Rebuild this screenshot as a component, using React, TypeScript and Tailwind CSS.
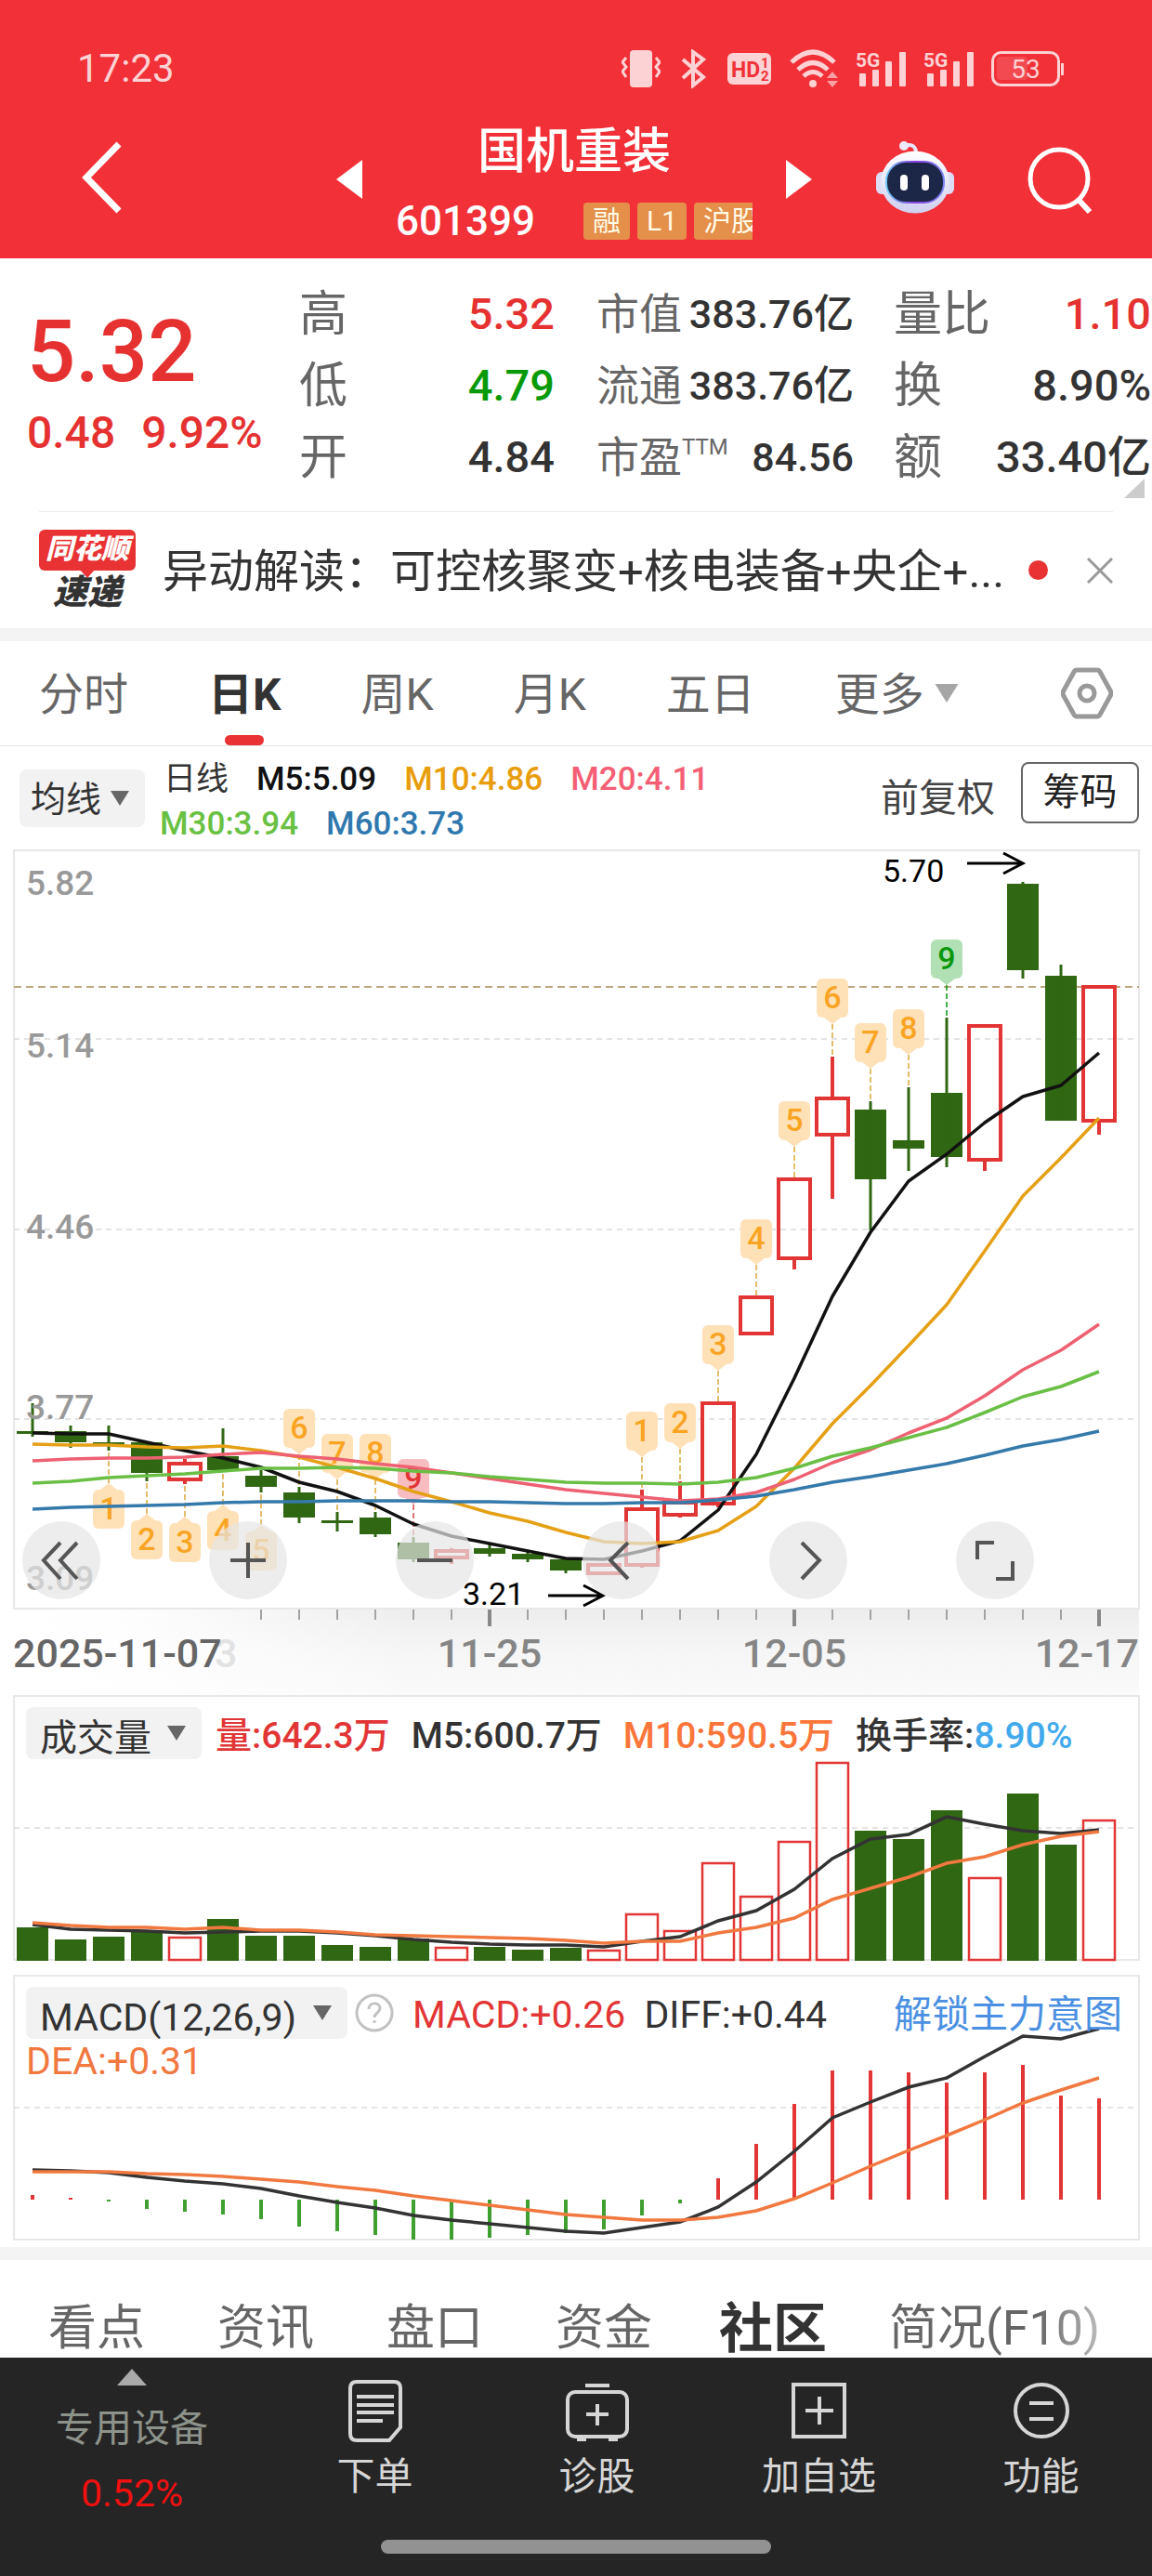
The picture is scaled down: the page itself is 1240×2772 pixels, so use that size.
import { useId, type ReactNode } from 'react';
import clsx from 'clsx';

type Candle = {
  up?: boolean;
  top: number;
  bottom: number;
  high?: number;
  low?: number;
};

type Marker = {
  i: number;
  label: string;
  tip: number;
  end: number;
  below?: boolean;
  tone?: 'orange' | 'green' | 'red';
};

const RED = '#e23535';
const GREEN = '#306713';

const x = (i: number) => 35 + i * 41;

const toPoints = (values: number[]) => values.map((y, i) => `${x(i)},${y}`).join(' ');

const candles: Candle[] = [
  { top: 1540, bottom: 1543, high: 1510, low: 1546 },
  { top: 1540, bottom: 1552, high: 1534, low: 1558 },
  { top: 1552, bottom: 1554, high: 1534, low: 1561 },
  { top: 1552, bottom: 1585, low: 1594 },
  { up: true, top: 1575, bottom: 1592, high: 1570, low: 1597 },
  { top: 1567, bottom: 1582, high: 1537 },
  { top: 1588, bottom: 1600, high: 1582, low: 1606 },
  { top: 1606, bottom: 1633, high: 1600, low: 1639 },
  { top: 1636, bottom: 1639, high: 1627, low: 1648 },
  { top: 1633, bottom: 1651, high: 1627, low: 1654 },
  { top: 1660, bottom: 1678, high: 1654, low: 1681 },
  { up: true, top: 1669, bottom: 1676, high: 1666, low: 1683 },
  { top: 1666, bottom: 1672, high: 1662, low: 1675 },
  { top: 1672, bottom: 1678, high: 1670, low: 1681 },
  { top: 1678, bottom: 1690, low: 1693 },
  { up: true, top: 1684, bottom: 1693, high: 1682, low: 1695 },
  { up: true, top: 1624, bottom: 1684, high: 1603, low: 1687 },
  { up: true, top: 1617, bottom: 1630, high: 1594, low: 1633 },
  { up: true, top: 1510, bottom: 1618, low: 1622 },
  { up: true, top: 1396, bottom: 1435 },
  { up: true, top: 1269, bottom: 1354, low: 1366 },
  { up: true, top: 1182, bottom: 1221, high: 1137, low: 1290 },
  { top: 1194, bottom: 1269, high: 1185, low: 1324 },
  { top: 1227, bottom: 1236, high: 1170, low: 1260 },
  { top: 1176, bottom: 1245, high: 1095, low: 1256 },
  { up: true, top: 1104, bottom: 1248, low: 1260 },
  { top: 951, bottom: 1044, high: 949, low: 1053 },
  { top: 1050, bottom: 1206, high: 1038 },
  { up: true, top: 1062, bottom: 1206, low: 1221 },
];

const averages = [
  {
    color: '#111111',
    values: [1542, 1543, 1543, 1552, 1561, 1569, 1579, 1595, 1605, 1620, 1640, 1653, 1661, 1669, 1677, 1678, 1669, 1658, 1625, 1565, 1483, 1395, 1326, 1271, 1242, 1208, 1180, 1168, 1133],
  },
  {
    color: '#e5a016',
    values: [1554, 1555, 1555, 1557, 1558, 1556, 1561, 1568, 1579, 1591, 1605, 1616, 1628, 1637, 1649, 1659, 1661, 1659, 1647, 1621, 1580, 1532, 1491, 1448, 1404, 1346, 1287, 1246, 1203],
  },
  {
    color: '#ee6173',
    values: [1572, 1570, 1569, 1569, 1568, 1565, 1563, 1567, 1570, 1575, 1579, 1585, 1591, 1597, 1603, 1607, 1611, 1615, 1613, 1606, 1592, 1574, 1560, 1542, 1526, 1502, 1474, 1453, 1425],
  },
  {
    color: '#6abf45',
    values: [1596, 1594, 1590, 1588, 1586, 1583, 1580, 1580, 1579, 1580, 1583, 1585, 1589, 1592, 1595, 1596, 1596, 1597, 1595, 1590, 1580, 1567, 1558, 1547, 1536, 1520, 1503, 1492, 1476],
  },
  {
    color: '#347aaa',
    values: [1624, 1622, 1621, 1620, 1619, 1617, 1616, 1616, 1615, 1615, 1615, 1616, 1616, 1617, 1618, 1618, 1617, 1617, 1614, 1610, 1603, 1595, 1589, 1582, 1575, 1566, 1556, 1549, 1540],
  },
];

const markers: Marker[] = [
  { i: 2, label: '1', tip: 1596, end: 1561, below: true },
  { i: 3, label: '2', tip: 1629, end: 1594, below: true },
  { i: 4, label: '3', tip: 1632, end: 1597, below: true },
  { i: 5, label: '4', tip: 1619, end: 1582, below: true },
  { i: 6, label: '5', tip: 1641, end: 1606, below: true },
  { i: 7, label: '6', tip: 1565, end: 1600 },
  { i: 8, label: '7', tip: 1592, end: 1627 },
  { i: 9, label: '8', tip: 1592, end: 1627 },
  { i: 10, label: '9', tip: 1619, end: 1654, tone: 'red' },
  { i: 16, label: '1', tip: 1568, end: 1603 },
  { i: 17, label: '2', tip: 1559, end: 1594 },
  { i: 18, label: '3', tip: 1475, end: 1510 },
  { i: 19, label: '4', tip: 1361, end: 1396 },
  { i: 20, label: '5', tip: 1234, end: 1268 },
  { i: 21, label: '6', tip: 1102, end: 1137 },
  { i: 22, label: '7', tip: 1150, end: 1185 },
  { i: 23, label: '8', tip: 1135, end: 1170 },
  { i: 24, label: '9', tip: 1060, end: 1095, tone: 'green' },
];

const tones = {
  orange: { bg: '#ffe1b8', fg: '#faa423', line: '#dba83a' },
  green: { bg: '#b1e0b4', fg: '#0a970d', line: '#0a970d' },
  red: { bg: '#f7bdc0', fg: '#e23535', line: '#d9484c' },
};

const volumes = [2074, 2087, 2084, 2077, 2085, 2065, 2083, 2083, 2093, 2095, 2086, 2096, 2095, 2098, 2096, 2099, 2060, 2078, 2005, 2041, 1982, 1897, 1970, 1979, 1948, 2021, 1930, 1985, 1959];
const volumeM5 = [2071, 2076, 2077, 2078, 2080, 2079, 2078, 2078, 2080, 2083, 2087, 2090, 2092, 2093, 2093, 2095, 2089, 2084, 2067, 2056, 2033, 2000, 1979, 1974, 1955, 1963, 1970, 1973, 1969];
const volumeM10 = [2069, 2072, 2074, 2074, 2076, 2074, 2077, 2077, 2079, 2082, 2083, 2084, 2085, 2086, 2088, 2091, 2089, 2089, 2080, 2074, 2064, 2044, 2032, 2020, 2005, 1998, 1985, 1976, 1971];

const macdZero = 2367;
const macd = [2362, 2365, 2369, 2377, 2380, 2383, 2388, 2396, 2401, 2405, 2410, 2410, 2408, 2405, 2403, 2399, 2384, 2371, 2344, 2307, 2264, 2228, 2228, 2230, 2241, 2230, 2222, 2255, 2258];
const diff = [2335, 2336, 2338, 2343, 2347, 2350, 2355, 2363, 2370, 2376, 2384, 2389, 2393, 2397, 2401, 2403, 2397, 2391, 2375, 2348, 2315, 2279, 2262, 2246, 2236, 2213, 2191, 2194, 2183];
const dea = [2337, 2337, 2337, 2339, 2340, 2342, 2345, 2348, 2353, 2357, 2363, 2368, 2373, 2378, 2383, 2386, 2389, 2389, 2386, 2379, 2366, 2349, 2331, 2314, 2298, 2281, 2263, 2249, 2236];

function StatusBar() {
  return (
    <div className="flex h-[116px] items-center justify-between pt-8 pr-[95px] pl-[83px] text-[#fcd2d4]">
      <time className="text-[42px] leading-[48px]">17:23</time>
      <div className="flex items-center gap-[19px]">
        <svg width="42" height="42" viewBox="0 0 42 42" fill="none" aria-hidden="true">
          <rect x="9" y="1" width="24" height="40" rx="4" fill="currentColor" />
          <path d="M5 9l-4 5 4 5-4 5 4 6M37 9l4 5-4 5 4 5-4 6" stroke="currentColor" strokeWidth="3" />
        </svg>
        <svg width="34" height="42" viewBox="0 0 34 42" fill="none" aria-hidden="true">
          <path d="M5 11l22 19-11 9V3l11 8L5 31" stroke="currentColor" strokeWidth="4" />
        </svg>
        <svg width="48" height="36" viewBox="0 0 48 36" aria-hidden="true">
          <rect y="1" width="47" height="34" rx="6" fill="currentColor" />
          <text x="4" y="27" fontSize="23" fontWeight="700" fill="#f23038">HD</text>
          <text x="36" y="17" fontSize="15" fontWeight="700" fill="#f23038">1</text>
          <text x="36" y="31" fontSize="15" fontWeight="700" fill="#f23038">2</text>
        </svg>
        <svg width="52" height="42" viewBox="0 0 52 42" fill="none" aria-hidden="true">
          <g stroke="currentColor" strokeWidth="5">
            <path d="M2 14Q25-8 48 14" />
            <path d="M9 22Q25 7 41 22" />
            <path d="M15 29Q25 20 35 29" />
          </g>
          <circle cx="25" cy="37" r="4" fill="currentColor" />
          <path d="M40 31l6-7 6 7zM40 34l6 7 6-7z" fill="currentColor" opacity=".7" />
        </svg>
        {[0, 1].map((n) => (
          <svg
            key={n}
            className="overflow-visible"
            width="54"
            height="40"
            viewBox="0 0 54 40"
            fill="currentColor"
            aria-hidden="true"
          >
            <text x="0" y="18" fontSize="21" fontWeight="700">5G</text>
            <rect x="4" y="25" width="7" height="14" rx="1" />
            <rect x="18" y="21" width="7" height="18" rx="1" />
            <rect x="32" y="12" width="7" height="27" rx="1" />
            <rect x="47" y="2" width="7" height="37" rx="1" />
          </svg>
        ))}
        <svg width="78" height="38" viewBox="0 0 78 38" fill="none" aria-label="53%">
          <rect x="1.5" y="1.5" width="71" height="35" rx="9" stroke="currentColor" strokeWidth="3" />
          <rect x="6" y="6" width="33" height="25" rx="4" fill="#fff" opacity=".12" />
          <path d="M76.500 13v13" stroke="currentColor" strokeWidth="3" />
          <text x="37" y="29" fontSize="28" textAnchor="middle" fill="currentColor">53</text>
        </svg>
      </div>
    </div>
  );
}

function Robot() {
  const id = useId();
  return (
    <svg width="84" height="78" viewBox="0 0 84 78" aria-hidden="true">
      <defs>
        <linearGradient id={`${id}head`} x1="0" y1="0" x2="0" y2="1">
          <stop offset="0" stopColor="#ffffff" />
          <stop offset="1" stopColor="#cfcff0" />
        </linearGradient>
        <linearGradient id={`${id}rim`} x1="0" y1="0" x2="1" y2="0">
          <stop offset="0" stopColor="#6fc9f5" />
          <stop offset=".5" stopColor="#8b3fe0" />
          <stop offset="1" stopColor="#7a86f0" />
        </linearGradient>
      </defs>
      <path d="M31 5c8-3 12 1 12 8" fill="none" stroke="#e8e6fa" strokeWidth="4" />
      <circle cx="30" cy="5" r="5" fill="#eceafb" />
      <rect x="0" y="33" width="14" height="24" rx="6" fill="#dcdcf4" />
      <rect x="70" y="33" width="14" height="24" rx="6" fill="#dcdcf4" />
      <ellipse cx="42" cy="44" rx="37" ry="33.500" fill={`url(#${id}head)`} />
      <rect x="11" y="22" width="62" height="44" rx="21" fill="#1c2647" stroke={`url(#${id}rim)`} strokeWidth="2" />
      <rect x="26" y="36" width="8" height="17" rx="4" fill="#fff" />
      <rect x="49" y="36" width="8" height="17" rx="4" fill="#fff" />
    </svg>
  );
}

function Header() {
  return (
    <header className="bg-[#f23038] text-white">
      <StatusBar />
      <div className="flex h-[162px] items-start justify-between px-[64px]">
        <button type="button" aria-label="返回" className="mt-9 w-[92px] pl-6">
          <svg width="44" height="78" viewBox="0 0 44 78" fill="none" stroke="currentColor" strokeWidth="7">
            <path d="M40 3L5 39l35 36" />
          </svg>
        </button>
        <div className="flex w-[900px] items-start justify-end">
          <button type="button" aria-label="上一只" className="mt-14">
            <svg width="28" height="42" viewBox="0 0 28 42" fill="currentColor">
              <path d="M0 21L28 0v42z" />
            </svg>
          </button>
          <div className="mx-9 flex w-[384px] flex-col items-center gap-4 pt-[18px]">
            <h1 className="text-[52px] leading-[60px] font-medium">国机重装</h1>
            <div className="flex h-[56px] w-full items-center gap-2 overflow-hidden whitespace-nowrap">
              <span className="mr-11 text-[44px] leading-[56px] font-medium">601399</span>
              {['融', 'L1', '沪股通'].map((tag) => (
                <span
                  key={tag}
                  className="rounded-sm bg-[#e48f4a] px-[10px] text-[30px] leading-[40px] text-[#fffce8]"
                >
                  {tag}
                </span>
              ))}
            </div>
          </div>
          <button type="button" aria-label="下一只" className="mt-14">
            <svg width="28" height="42" viewBox="0 0 28 42" fill="currentColor">
              <path d="M28 21L0 0v42z" />
            </svg>
          </button>
          <button type="button" aria-label="智能助手" className="mt-9 ml-[69px]">
            <Robot />
          </button>
          <button type="button" aria-label="搜索" className="mt-[42px] ml-[79px]">
            <svg width="70" height="72" viewBox="0 0 70 72" fill="none" stroke="currentColor" strokeWidth="5">
              <circle cx="34" cy="34" r="31" />
              <path d="M54 56l13 14" strokeWidth="6" />
            </svg>
          </button>
        </div>
      </div>
    </header>
  );
}

function Stat({ label, value, className, small }: { label: ReactNode; value: string; className?: string; small?: boolean }) {
  return (
    <div className="flex h-[77px] items-center justify-between whitespace-nowrap">
      <dt className={clsx('flex items-center text-[#666]', small ? 'text-[46px]' : 'text-[52px]')}>{label}</dt>
      <dd className={clsx('font-medium', small ? 'text-[43px]' : 'text-[47px]', className ?? 'text-[#333]')}>{value}</dd>
    </div>
  );
}

function Quote() {
  return (
    <section className="relative grid grid-cols-[322fr_320fr_320fr_278fr] pt-[22px] pb-[19px]">
      <div className="pt-6 pl-[29px] text-[#e53231]">
        <p className="text-[92px] leading-[110px] font-medium">5.32</p>
        <p className="flex gap-7 text-[48px] leading-[64px] font-medium">
          <span>0.48</span>
          <span>9.92%</span>
        </p>
      </div>
      <dl className="pr-[45px]">
        <Stat label="高" value="5.32" className="text-[#e53231]" />
        <Stat label="低" value="4.79" className="text-[#089a08]" />
        <Stat label="开" value="4.84" />
      </dl>
      <dl className="pr-[43px]">
        <Stat small label="市值" value="383.76亿" />
        <Stat small label="流通" value="383.76亿" />
        <Stat
          small
          label={
            <>
              市盈<sup className="text-2xl">TTM</sup>
            </>
          }
          value="84.56"
        />
      </dl>
      <dl className="pr-[1px]">
        <Stat label="量比" value="1.10" className="text-[#e53231]" />
        <Stat label="换" value="8.90%" />
        <Stat label="额" value="33.40亿" />
      </dl>
      <svg className="absolute right-2 bottom-[14px]" width="22" height="21" viewBox="0 0 22 21" aria-hidden="true">
        <path d="M22 0v21H0z" fill="#ccc" />
      </svg>
    </section>
  );
}

function NewsBar() {
  return (
    <section className="mx-[42px] flex h-[126px] items-center border-t border-[#ececec]">
      <div className="flex w-[104px] shrink-0 flex-col items-center font-black italic">
        <span className="relative h-[44px] w-full rounded-md bg-[#e83233] text-center text-[30px] leading-[42px] text-white">
          同花顺
          <svg className="absolute -bottom-2 left-11" width="16" height="9" viewBox="0 0 16 9" aria-hidden="true">
            <path d="M0 0h16L8 9z" fill="#e83233" />
          </svg>
        </span>
        <span className="mt-1 text-[37px] leading-[40px] text-[#333]">速递</span>
      </div>
      <a href="#news" className="ml-[29px] flex-1 pt-1 text-[49px] whitespace-nowrap text-[#333]">
        异动解读：可控核聚变+核电装备+央企+...
      </a>
      <span className="h-[21px] w-[21px] rounded-full bg-[#e83233]" />
      <button type="button" aria-label="关闭" className="ml-[42px]">
        <svg width="28" height="28" viewBox="0 0 28 28" stroke="#999" strokeWidth="3">
          <path d="M1 1l26 26M27 1L1 27" />
        </svg>
      </button>
    </section>
  );
}

function Triangle({ className }: { className?: string }) {
  return (
    <svg className={className} width="22" height="16" viewBox="0 0 22 16" fill="currentColor" aria-hidden="true">
      <path d="M1 0h20L11 16z" />
    </svg>
  );
}

function PeriodTabs() {
  return (
    <nav className="flex h-[113px] items-center border-b border-[#e4e4e4] px-[42px] text-[48px] whitespace-nowrap text-[#666]">
      <div className="flex h-full flex-1 items-center gap-[86px]">
        {['分时', '日K', '周K', '月K', '五日'].map((tab) =>
          tab === '日K' ? (
            <button key={tab} type="button" className="relative h-full pt-1 font-bold text-[#333]">
              {tab}
              <span className="absolute bottom-0 left-[18px] h-[11px] w-[42px] rounded-full bg-[#e83233]" />
            </button>
          ) : (
            <button key={tab} type="button" className="h-full pt-1">
              {tab}
            </button>
          ),
        )}
        <div className="relative">
          <select aria-label="更多周期" className="w-[134px] appearance-none bg-transparent pt-1">
            <option>更多</option>
          </select>
          <Triangle className="pointer-events-none absolute top-1/2 right-0 h-[20px] w-[28px] -translate-y-1/2 text-[#a6a6a6]" />
        </div>
      </div>
      <button type="button" aria-label="设置">
        <svg width="56" height="56" viewBox="0 0 56 56" fill="none" stroke="#999" strokeWidth="5" strokeLinejoin="round">
          <path d="M17 3h22q2 0 3 2l11 20q2 3 0 6L42 51q-1 2-3 2H17q-2 0-3-2L3 31q-2-3 0-6L14 5q1-2 3-2z" />
          <circle cx="28" cy="28" r="8" />
        </svg>
      </button>
    </nav>
  );
}

function Picker({ label, text, className }: { label: string; text: string; className: string }) {
  return (
    <div className="relative shrink-0">
      <select
        aria-label={label}
        className={clsx('block appearance-none rounded-lg bg-[#f2f2f2] pt-[3px] whitespace-nowrap text-[#333]', className)}
      >
        <option>{text}</option>
      </select>
      <Triangle className="pointer-events-none absolute top-1/2 right-4 -translate-y-1/2 text-[#666]" />
    </div>
  );
}

function AverageBar() {
  return (
    <div className="flex h-[111px] items-center pr-[14px] pl-[21px]">
      <Picker label="主图指标" text="均线" className="h-[62px] w-[135px] pl-3 text-[38px]" />
      <div className="ml-4 flex max-w-[640px] flex-1 flex-wrap gap-x-[30px] pt-2 text-[35px] leading-[48px] font-medium">
        <span className="pl-1 font-normal text-[#333]">日线</span>
        <span className="text-[#111]">M5:5.09</span>
        <span className="text-[#e89e0c]">M10:4.86</span>
        <span className="text-[#f55f75]">M20:4.11</span>
        <span className="text-[#69c142]">M30:3.94</span>
        <span className="text-[#2f78ae]">M60:3.73</span>
      </div>
      <button type="button" className="ml-auto text-[41px] leading-[60px] text-[#444]">
        前复权
      </button>
      <button
        type="button"
        className="mb-3 ml-7 h-[66px] w-[127px] rounded-lg border-2 border-[#666] text-[40px] leading-[60px] text-[#222]"
      >
        筹码
      </button>
    </div>
  );
}

function MarkerBadge({ marker }: { marker: Marker }) {
  const { i, label, tip, end, below } = marker;
  const tone = tones[marker.tone ?? 'orange'];
  const cx = x(i);
  const boxTop = below ? tip + 7 : tip - 49;
  return (
    <g>
      <path d={`M${cx} ${tip}V${end}`} stroke={tone.line} strokeWidth="1.500" strokeDasharray="6 3" />
      <rect x={cx - 17} y={boxTop} width="34" height="42" rx="6" fill={tone.bg} />
      <path
        d={below ? `M${cx - 9} ${tip + 7}L${cx} ${tip}l9 7z` : `M${cx - 9} ${tip - 7}L${cx} ${tip}l9-7z`}
        fill={tone.bg}
      />
      <text x={cx} y={boxTop + 32} textAnchor="middle" fontSize="34" fontWeight="500" fill={tone.fg}>
        {label}
      </text>
    </g>
  );
}

const tools = [
  { label: '快退', d: 'M41 23L23 42l18 20M59 23L41 42l18 20' },
  { label: '放大', d: 'M42 23v38M23 42h38' },
  { label: '缩小', d: 'M23 42h38' },
  { label: '向左', d: 'M49 23L30 42l19 20' },
  { label: '向右', d: 'M35 23l19 19-19 20' },
  { label: '全屏', d: 'M41 23H23v18M43 62h18V43' },
];

function PriceChart() {
  const id = useId();
  return (
    <section className="relative">
      <svg className="block w-full" viewBox="0 914 1240 910" fill="none" role="img" aria-label="日K线图">
        <defs>
          <linearGradient id={`${id}axis`} x1="0" y1="0" x2="0" y2="1">
            <stop offset="0" stopColor="#ededed" />
            <stop offset=".5" stopColor="#f6f6f6" />
            <stop offset="1" stopColor="#fafafa" />
          </linearGradient>
          <linearGradient id={`${id}fade`}>
            <stop offset="0" stopColor="#fff" />
            <stop offset=".3" stopColor="#fff" stopOpacity=".9" />
            <stop offset="1" stopColor="#fff" stopOpacity="0" />
          </linearGradient>
        </defs>

        <rect x="15" y="1732" width="1211" height="92" fill={`url(#${id}axis)`} />
        <rect x="15" y="1732" width="430" height="92" fill={`url(#${id}fade)`} />
        <rect x="15" y="915" width="1211" height="816" stroke="#e8e8e8" strokeWidth="2" />

        <g stroke="#dcdcdc" strokeWidth="1.500" strokeDasharray="6 5">
          <path d="M15 1118H1226M15 1323H1226M15 1527H1226" />
        </g>
        <path d="M15 1062H1226" stroke="#bda780" strokeWidth="2" strokeDasharray="8 5" />

        {candles.map(({ up, top, bottom, high = top, low = bottom }, i) =>
          up ? (
            <g key={i} stroke={RED} strokeWidth="4">
              <rect x={x(i) - 17} y={top} width="34" height={bottom - top} />
              <path d={`M${x(i)} ${high}V${top}M${x(i)} ${bottom}V${low}`} />
            </g>
          ) : (
            <g key={i}>
              <rect x={x(i) - 17} y={top} width="34" height={bottom - top} fill={GREEN} />
              <path d={`M${x(i)} ${high}V${low}`} stroke={GREEN} strokeWidth="3" />
            </g>
          ),
        )}

        <g fontSize="37" fontWeight="500" fill="#999">
          <text x="28" y="963">5.82</text>
          <text x="28" y="1138">5.14</text>
          <text x="28" y="1333">4.46</text>
          <text x="28" y="1527">3.77</text>
          <text x="28" y="1711">3.09</text>
        </g>

        {markers.map((marker) => (
          <MarkerBadge key={`${marker.i}-${marker.label}`} marker={marker} />
        ))}

        {averages.map(({ color, values }) => (
          <polyline key={color} points={toPoints(values)} stroke={color} strokeWidth="3.500" strokeLinejoin="round" />
        ))}

        <g fontSize="34" fill="#000">
          <text x="950" y="949">5.70</text>
          <text x="498" y="1727">3.21</text>
        </g>
        <g stroke="#000" strokeWidth="3">
          <path d="M1041 929h60M1080 918l21 11-21 11" />
          <path d="M590 1717h59M628 1706l21 11-21 11" />
        </g>

        {candles.map((_, i) => {
          if (i < 6) return null;
          const major = i % 8 === 4;
          return (
            <path
              key={i}
              d={`M${x(i)} 1732v${major ? 18 : 11}`}
              stroke={major ? '#888' : '#a3a3a3'}
              strokeWidth={major ? 4 : 2}
            />
          );
        })}
        <g fontSize="43" fontWeight="500" fill="#858585">
          <text x="231" y="1794" fill="#e2e2e2">3</text>
          <text x="14" y="1794" fill="#666">2025-11-07</text>
          <text x="527" y="1794" textAnchor="middle">11-25</text>
          <text x="855" y="1794" textAnchor="middle">12-05</text>
          <text x="1226" y="1794" textAnchor="end">12-17</text>
        </g>
      </svg>
      <div className="absolute bottom-[103px] left-6 flex gap-[117px]">
        {tools.map(({ label, d }) => (
          <button key={label} type="button" aria-label={label} className="h-[84px] w-[84px] rounded-full bg-[#e5e5e5]/70">
            <svg viewBox="0 0 84 84" fill="none" stroke="#555" strokeWidth="4">
              <path d={d} />
            </svg>
          </button>
        ))}
      </div>
    </section>
  );
}

function VolumeChart() {
  return (
    <section className="relative">
      <svg className="block w-full" viewBox="0 1824 1240 301" fill="none" role="img" aria-label="成交量">
        <rect x="15" y="1825" width="1211" height="284" stroke="#e8e8e8" strokeWidth="2" />
        <path d="M15 1967H1226" stroke="#dcdcdc" strokeWidth="1.500" strokeDasharray="6 5" />
        {volumes.map((top, i) =>
          candles[i].up ? (
            <rect key={i} x={x(i) - 17} y={top} width="34" height={2109 - top} stroke={RED} strokeWidth="2.500" />
          ) : (
            <rect key={i} x={x(i) - 17} y={top} width="34" height={2110 - top} fill={GREEN} />
          ),
        )}
        <polyline points={toPoints(volumeM5)} stroke="#333" strokeWidth="3.500" />
        <polyline points={toPoints(volumeM10)} stroke="#f1783f" strokeWidth="3.500" />
      </svg>
      <div className="absolute inset-x-7 top-[13px] flex items-start gap-[23px] text-[39px] leading-[62px] font-medium whitespace-nowrap">
        <div className="-mr-2 font-normal">
          <Picker label="副图指标" text="成交量" className="h-[56px] w-[189px] pl-[15px] text-[40px]" />
        </div>
        <span className="text-[#e23535]">量:642.3万</span>
        <span className="text-[#333]">M5:600.7万</span>
        <span className="text-[#fb763a]">M10:590.5万</span>
        <span className="text-[#333]">
          换手率:<span className="text-[#42aaec]">8.90%</span>
        </span>
      </div>
    </section>
  );
}

function MacdChart() {
  return (
    <section className="relative">
      <svg className="block w-full" viewBox="0 2125 1240 293" fill="none" role="img" aria-label="MACD">
        <rect x="15" y="2126" width="1211" height="284" stroke="#e8e8e8" strokeWidth="2" />
        <path d="M15 2268H1226" stroke="#dcdcdc" strokeWidth="1.500" strokeDasharray="6 5" />
        {macd.map((y, i) => (
          <path key={i} d={`M${x(i)} ${macdZero}V${y}`} stroke={y < macdZero ? RED : '#3f9f2f'} strokeWidth="4" />
        ))}
        <polyline points={toPoints(diff)} stroke="#333" strokeWidth="3.500" />
        <polyline points={toPoints(dea)} stroke="#f1783f" strokeWidth="3.500" />
      </svg>
      <div className="absolute inset-x-7 top-[13px] text-[41px] whitespace-nowrap">
        <div className="flex items-start leading-[60px]">
          <Picker label="副图指标" text="MACD(12,26,9)" className="h-[56px] w-[346px] pl-[15px] text-[41px]" />
          <button type="button" aria-label="指标说明" className="mt-[7px] mr-5 ml-2">
            <svg width="42" height="42" viewBox="0 0 42 42" fill="none" stroke="#c2c2c2" strokeWidth="3">
              <circle cx="21" cy="21" r="19" />
              <path d="M15 17c0-8 12-8 12-1 0 5-6 5-6 10M21 29v3" />
            </svg>
          </button>
          <span className="text-[#e23535]">MACD:+0.26</span>
          <span className="ml-5 text-[#333]">DIFF:+0.44</span>
          <a href="#unlock" className="mr-1 ml-auto text-[#4a90e2]">
            解锁主力意图
          </a>
        </div>
        <p className="leading-[40px] text-[#f1783f]">DEA:+0.31</p>
      </div>
    </section>
  );
}

function ContentTabs() {
  return (
    <nav className="flex h-[105px] items-start overflow-hidden pt-[33px] pl-[13px] text-[52px] leading-[82px] whitespace-nowrap text-[#666]">
      {['看点', '资讯', '盘口', '资金', '社区'].map((tab) => (
        <button
          key={tab}
          type="button"
          className={clsx('w-[182px] shrink-0', tab === '社区' && 'text-[58px] font-bold text-[#333]')}
        >
          {tab}
        </button>
      ))}
      <button
        type="button"
        className="ml-[34px] bg-linear-to-r from-[#666] from-70% to-[#bbb] bg-clip-text text-transparent"
      >
        简况(F10)
      </button>
    </nav>
  );
}

const actions = [
  {
    label: '下单',
    icon: (
      <path d="M10 2h40q7 0 7 7v42L45 65H10q-7 0-7-7V9q0-7 7-7zM10 18h40M10 27h40M10 35h40M10 44h28" />
    ),
  },
  {
    label: '诊股',
    icon: (
      <>
        <rect x="-2" y="13" width="64" height="48" rx="8" />
        <path d="M17 6h26M30 26v23M18 37h24M8 64h10M42 64h10" />
      </>
    ),
  },
  {
    label: '加自选',
    icon: (
      <>
        <rect x="2" y="5" width="55" height="56" />
        <path d="M30 18v30M15 33h30" />
      </>
    ),
  },
  {
    label: '功能',
    icon: (
      <>
        <circle cx="30" cy="33" r="28" />
        <path d="M17 25h26M17 42h26" />
      </>
    ),
  },
];

function BottomBar() {
  return (
    <footer className="bg-[#252525] pb-6 text-[#d6d6d6]">
      <div className="flex h-[196px] text-[41px] leading-[56px]">
        <button type="button" className="flex w-[284px] flex-col items-center pt-3 text-[#8d938b]">
          <svg width="32" height="18" viewBox="0 0 32 18" fill="#aaa" aria-hidden="true">
            <path d="M16 0l16 18H0z" />
          </svg>
          <span className="mt-[18px]">专用设备</span>
          <span className="mt-[14px] text-[#f01010]">0.52%</span>
        </button>
        {actions.map(({ label, icon }) => (
          <button key={label} type="button" className="flex flex-1 flex-col items-center pt-6">
            <svg
              className="overflow-visible"
              width="60"
              height="68"
              viewBox="0 0 60 68"
              fill="none"
              stroke="currentColor"
              strokeWidth="4"
              aria-hidden="true"
            >
              {icon}
            </svg>
            <span className="mt-2">{label}</span>
          </button>
        ))}
      </div>
      <div className="mx-auto h-[15px] w-[420px] rounded-full bg-[#929292]" />
    </footer>
  );
}

export default function App() {
  return (
    <main className="bg-white font-[Roboto,'Noto_Sans_CJK_SC',sans-serif]">
      <Header />
      <Quote />
      <NewsBar />
      <div className="h-[14px] bg-[#f4f4f4]" />
      <PeriodTabs />
      <AverageBar />
      <PriceChart />
      <VolumeChart />
      <MacdChart />
      <div className="h-[14px] bg-[#f4f4f4]" />
      <ContentTabs />
      <BottomBar />
    </main>
  );
}
